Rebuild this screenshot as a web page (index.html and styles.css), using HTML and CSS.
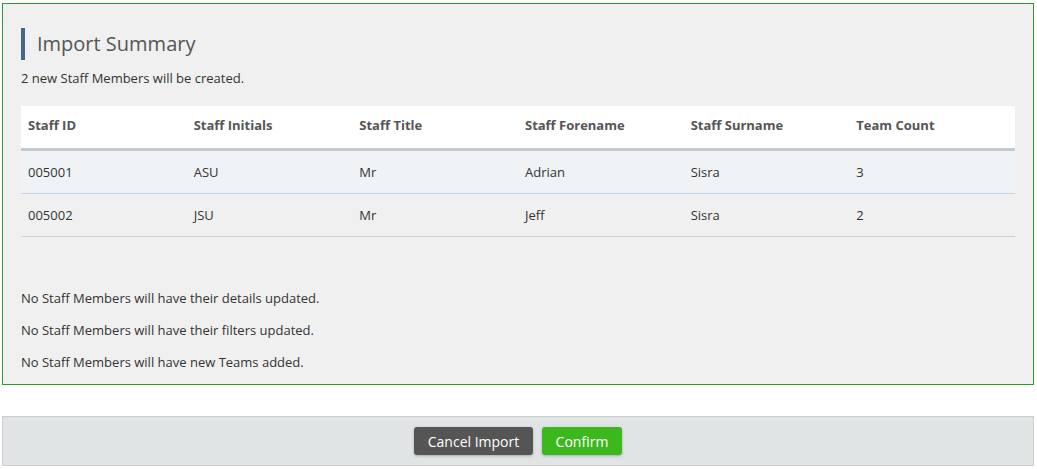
FILE: index.html
```html
<!DOCTYPE html>
<html lang="en">
<head>
    <meta charset="UTF-8">
    <meta name="viewport" content="width=device-width, initial-scale=1.0">
    <title>Import Summary</title>
    <link rel="stylesheet" href="styles.css">
</head>
<body>
<div class="page">
    <!-- Summary panel -->
    <div class="summary-panel">
        <h2 class="section-title">Import Summary</h2>
        <p class="lead">2 new Staff Members will be created.</p>

        <table class="staff-table">
            <thead>
                <tr>
                    <th>Staff ID</th>
                    <th>Staff Initials</th>
                    <th>Staff Title</th>
                    <th>Staff Forename</th>
                    <th>Staff Surname</th>
                    <th>Team Count</th>
                </tr>
            </thead>
            <tbody>
                <tr class="odd">
                    <td>005001</td>
                    <td>ASU</td>
                    <td>Mr</td>
                    <td>Adrian</td>
                    <td>Sisra</td>
                    <td>3</td>
                </tr>
                <tr>
                    <td>005002</td>
                    <td>JSU</td>
                    <td>Mr</td>
                    <td>Jeff</td>
                    <td>Sisra</td>
                    <td>2</td>
                </tr>
            </tbody>
        </table>

        <div class="notes">
            <p>No Staff Members will have their details updated.</p>
            <p>No Staff Members will have their filters updated.</p>
            <p>No Staff Members will have new Teams added.</p>
        </div>
    </div>

    <!-- Action bar -->
    <div class="action-bar">
        <button class="btn btn-cancel">Cancel Import</button>
        <button class="btn btn-confirm">Confirm</button>
    </div>
</div>
</body>
</html>
```

FILE: styles.css
```css
body {
    margin: 0;
    font-family: "Open Sans", Arial, sans-serif;
    font-size: 13px;
    color: #333;
    background-color: #fff;
}
.page {
    padding: 3px 3px 0 2px;
}
.summary-panel {
    background-color: #f0f0f0;
    border: 1px solid #2a9d2a;
    padding: 24px 18px 12px 18px;
}
.section-title {
    margin: 0;
    height: 32px;
    line-height: 32px;
    border-left: 4px solid #47658a;
    padding-left: 12px;
    font-size: 20px;
    font-weight: normal;
    color: #555;
}
.lead {
    margin: 8px 0 18px 0;
    line-height: 20px;
}
.staff-table {
    width: 100%;
    border-collapse: collapse;
    table-layout: fixed;
}
.staff-table th {
    background-color: #fff;
    text-align: left;
    font-weight: bold;
    color: #555;
    height: 38px;
    padding: 0 7px 4px 7px;
    border-bottom: 3px solid #c3c9ce;
}
.staff-table td {
    height: 42px;
    padding: 0 7px;
    border-bottom: 1px solid #cfcfcf;
}
.staff-table tr.odd td {
    background-color: #eff3f6;
    border-bottom-color: #c6d4e1;
}
.notes {
    margin-top: 51px;
}
.notes p {
    margin: 0 0 12px 0;
    line-height: 20px;
}
.notes p:last-child {
    margin-bottom: 0;
}
.action-bar {
    margin-top: 31px;
    background-color: #e1e4e5;
    border: 1px solid #cdcdcd;
    height: 48px;
    display: flex;
    justify-content: center;
    align-items: center;
    gap: 9px;
}
.btn {
    height: 28px;
    border: none;
    border-radius: 3px;
    color: #fff;
    font-family: "Open Sans", Arial, sans-serif;
    font-size: 14px;
    padding: 0;
    white-space: nowrap;
    cursor: pointer;
    box-shadow: 0 1px 3px rgba(0, 0, 0, 0.25);
}
.btn-cancel {
    background-color: #555;
    width: 119px;
}
.btn-confirm {
    background-color: #3db71e;
    width: 80px;
}
```
